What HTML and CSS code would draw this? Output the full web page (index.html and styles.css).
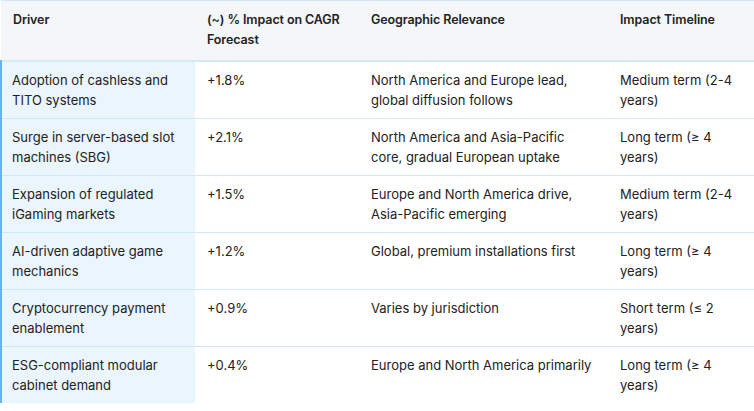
FILE: index.html
```html
<!DOCTYPE html>
<html lang="en">
<head>
<meta charset="utf-8">
<link rel="stylesheet" href="styles.css">
</head>
<body>
<table class="drivers">
  <colgroup>
    <col class="c1"><col class="c2"><col class="c3"><col class="c4">
  </colgroup>
  <thead>
    <tr>
      <th>Driver</th>
      <th>(~) % Impact on CAGR Forecast</th>
      <th>Geographic Relevance</th>
      <th>Impact Timeline</th>
    </tr>
  </thead>
  <tbody>
    <tr>
      <td>Adoption of cashless and TITO systems</td>
      <td>+1.8%</td>
      <td>North America and Europe lead, global diffusion follows</td>
      <td>Medium term (2-4 years)</td>
    </tr>
    <tr>
      <td>Surge in server-based slot machines (SBG)</td>
      <td>+2.1%</td>
      <td>North America and Asia-Pacific core, gradual European uptake</td>
      <td>Long term (≥ 4 years)</td>
    </tr>
    <tr>
      <td>Expansion of regulated iGaming markets</td>
      <td>+1.5%</td>
      <td>Europe and North America drive, Asia-Pacific emerging</td>
      <td>Medium term (2-4 years)</td>
    </tr>
    <tr>
      <td>AI-driven adaptive game mechanics</td>
      <td>+1.2%</td>
      <td>Global, premium installations first</td>
      <td>Long term (≥ 4 years)</td>
    </tr>
    <tr>
      <td>Cryptocurrency payment enablement</td>
      <td>+0.9%</td>
      <td>Varies by jurisdiction</td>
      <td>Short term (≤ 2 years)</td>
    </tr>
    <tr>
      <td>ESG-compliant modular cabinet demand</td>
      <td>+0.4%</td>
      <td>Europe and North America primarily</td>
      <td>Long term (≥ 4 years)</td>
    </tr>
  </tbody>
</table>
</body>
</html>
```
FILE: styles.css
```css
html, body {
  margin: 0;
  padding: 0;
  background: #ffffff;
}
body {
  font-family: "Inter", "Open Sans", sans-serif;
  color: #222222;
}
.drivers {
  width: 754px;
  table-layout: fixed;
  border-collapse: collapse;
  font-size: 13px;
  line-height: 20px;
}
.c1 { width: 194px; }
.c2 { width: 164px; }
.c3 { width: 249px; }
.c4 { width: 147px; }
.drivers thead tr {
  background: #f4f6f9;
  border-top: 1px solid #cfe6f5;
  border-bottom: 2px solid #d5e9f6;
}
.drivers th {
  text-align: left;
  vertical-align: top;
  font-weight: 600;
  font-size: 12.5px;
  letter-spacing: -0.1px;
  padding: 9px 10px 10px 12px;
}
.drivers td {
  vertical-align: top;
  padding: 8px 12px 8px;
}
.drivers tbody tr {
  border-bottom: 1px solid #cfe6f5;
}
.drivers tbody tr:last-child {
  border-bottom: none;
}
.drivers td:first-child {
  background: #eaf5fd;
  border-left: 2px solid #6cb2ea;
  padding-left: 10px;
}
```
